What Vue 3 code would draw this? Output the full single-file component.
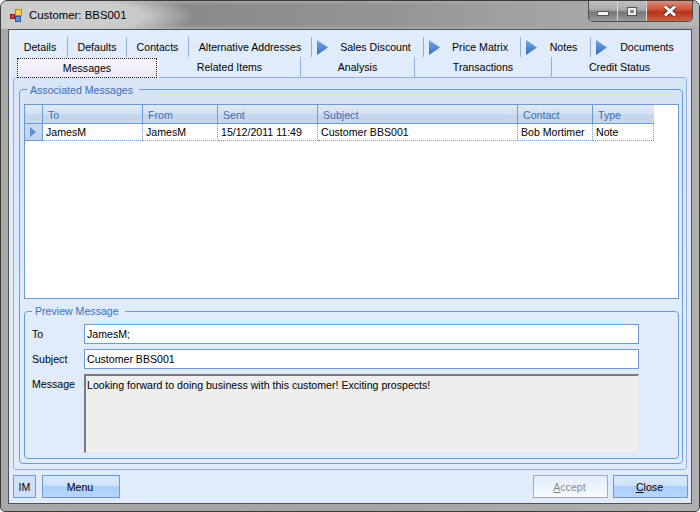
<script setup>
const topTabs = [
  { label: 'Details' }, { label: 'Defaults' }, { label: 'Contacts' },
  { label: 'Alternative Addresses' }, { label: 'Sales Discount', arrow: true },
  { label: 'Price Matrix', arrow: true }, { label: 'Notes', arrow: true }, { label: 'Documents', arrow: true }
]
const lowerTabs = ['Messages', 'Related Items', 'Analysis', 'Transactions', 'Credit Status']
const columns = ['To', 'From', 'Sent', 'Subject', 'Contact', 'Type']
const row = ['JamesM', 'JamesM', '15/12/2011 11:49', 'Customer BBS001', 'Bob Mortimer', 'Note']
</script>

<template>
  <div class="window">
    <header class="titlebar">
      <svg class="app-icon" width="14" height="14" viewBox="0 0 14 14">
        <rect x="0.5" y="5.5" width="4" height="4" fill="#e04030" stroke="#8a2018" />
        <rect x="5.5" y="0.5" width="6" height="6" fill="#f8cc50" stroke="#b08a20" />
        <rect x="5.5" y="7.5" width="5" height="5" fill="#5c90e0" stroke="#2c5aa0" />
      </svg>
      <span class="title-text">Customer: BBS001</span>
      <div class="controls">
        <div class="ctl ctl-min"><span class="glyph-min"></span></div>
        <div class="ctl ctl-max"><span class="glyph-max"></span></div>
        <div class="ctl ctl-close">
          <svg width="16" height="12" viewBox="0 0 16 12">
            <path d="M3 1.5 L13 10.5 M13 1.5 L3 10.5" stroke="#6a3028" stroke-width="5" fill="none" />
            <path d="M3 1.5 L13 10.5 M13 1.5 L3 10.5" stroke="#fff" stroke-width="3" fill="none" />
          </svg>
        </div>
      </div>
    </header>

    <main class="client">
      <nav class="tabs tabs-top">
        <div v-for="tab in topTabs" :key="tab.label" class="tab" :class="{ 'has-arrow': tab.arrow }">
          <svg v-if="tab.arrow" class="tab-arrow" width="11" height="15" viewBox="0 0 11 15">
            <defs>
              <linearGradient id="tabArrow" x1="0" y1="0" x2="0" y2="1">
                <stop offset="0" stop-color="#7aa6de" />
                <stop offset="1" stop-color="#2f6cc4" />
              </linearGradient>
            </defs>
            <path d="M0 0 L11 7.5 L0 15 Z" fill="url(#tabArrow)" />
          </svg>
          <span class="tab-label">{{ tab.label }}</span>
        </div>
      </nav>
      <nav class="tabs tabs-lower">
        <div v-for="(tab, i) in lowerTabs" :key="tab" class="tab" :class="{ selected: i === 0 }">
          <span class="tab-focus">{{ tab }}</span>
        </div>
      </nav>

      <section class="panel">
        <fieldset class="group group-assoc">
          <legend>Associated Messages</legend>
          <div class="grid">
            <div class="head corner"></div>
            <div v-for="c in columns" :key="c" class="head">{{ c }}</div>
            <div class="row-head"><span class="row-mark"></span></div>
            <div v-for="(v, i) in row" :key="i" class="cell">{{ v }}</div>
          </div>
          <fieldset class="group group-preview">
            <legend>Preview Message</legend>
            <div class="form">
              <label>To</label>
              <div class="field">JamesM;</div>
              <label>Subject</label>
              <div class="field">Customer BBS001</div>
              <label class="label-message">Message</label>
              <div class="message">Looking forward to doing business with this customer! Exciting prospects!</div>
            </div>
          </fieldset>
        </fieldset>
      </section>

      <footer class="footer">
        <button class="btn btn-im">IM</button>
        <button class="btn btn-menu">Menu</button>
        <span class="spacer"></span>
        <button class="btn btn-accept" disabled><u>A</u>ccept</button>
        <button class="btn btn-close"><u>C</u>lose</button>
      </footer>
    </main>
  </div>
</template>

<style>
html, body { margin: 0; background: #fff; }
</style>

<style scoped>
.window {
  width: 700px;
  height: 512px;
  box-sizing: border-box;
  padding: 0 7px 7px;
  display: flex;
  flex-direction: column;
  background: linear-gradient(90deg, #a8a8a8, #a4a4a4 50%, #b0b0b0);
  border: 1px solid #3c3c3c;
  border-radius: 7px 7px 5px 5px;
  font: 10.6px "Liberation Sans", Arial, sans-serif;
  color: #000;
  overflow: hidden;
}
.titlebar {
  height: 28px;
  flex: none;
  display: flex;
  align-items: flex-start;
  margin: 0 -7px;
  padding-left: 9px;
  background:
    radial-gradient(ellipse 135px 26px at 58px 15px, #d0d0d0 0%, #cacaca 62%, rgba(170,170,170,0) 100%),
    linear-gradient(#a6a6a6, rgba(140,140,140,0) 4px, rgba(140,140,140,0) 24px, #a8a8a8),
    linear-gradient(90deg, #a0a0a0, #8a8a8a 28%, #949494 55%, #a8a8a8 85%, #b8b8b8);
}
.app-icon { margin-top: 8px; flex: none; }
.title-text { margin: 7px 0 0 5px; line-height: 15px; font-size: 11.4px; }
.controls {
  margin-left: auto;
  margin-right: 6px;
  display: flex;
  height: 20px;
  border: 1px solid #4c4c4c;
  border-top: 0;
  border-radius: 0 0 5px 5px;
  overflow: hidden;
}
.ctl {
  display: flex;
  align-items: center;
  justify-content: center;
  height: 100%;
}
.ctl-min, .ctl-max {
  width: 28px;
  background: linear-gradient(#c0c0c0, #a8a8a8 45%, #757575 55%, #9a9a9a);
  border-right: 1px solid #d8d8d8;
}
.ctl-close {
  width: 45px;
  background: linear-gradient(#d89080, #c85038 45%, #b83018 55%, #d06040);
}
.glyph-min {
  width: 10px;
  height: 3px;
  margin-top: 5px;
  background: #f4f4f4;
  border: 1px solid #555;
}
.glyph-max {
  width: 4px;
  height: 3px;
  background: #888;
  border: 2px solid #eee;
  outline: 1px solid #555;
}
.client {
  flex: 1;
  min-height: 0;
  display: flex;
  flex-direction: column;
  box-sizing: border-box;
  padding: 7px 4px 0;
  background: #e0ecfc;
  border: 1px solid #505058;
}
.tabs {
  display: grid;
  height: 20px;
  flex: none;
}
.tabs-top { grid-template-columns: 55px 59px 62px 123px 112px 97px 70px 96px; }
.tabs-lower { grid-template-columns: 146px 142px 114px 137px 135px; }
.tab {
  display: flex;
  align-items: center;
  justify-content: center;
  border-right: 1px solid #8fb0da;
  white-space: nowrap;
  min-width: 0;
}
.tab:last-child { border-right: 0; }
.tabs-lower .tab:not(.selected) { padding-bottom: 1px; box-sizing: border-box; }
.has-arrow {
  justify-content: flex-start;
  padding-left: 5px;
}
.tab-arrow { flex: none; }
.has-arrow .tab-label { flex: 1; text-align: center; }
.selected {
  margin-left: 4px;
  margin-top: 1px;
  margin-bottom: -1px;
  position: relative;
  z-index: 1;
  background: linear-gradient(#f8f6fc, #ece8f6);
  border-right: 2px solid #f4f8ff;
}
.tab-focus { display: block; text-align: center; }
.selected .tab-focus {
  flex: 1;
  align-self: stretch;
  line-height: 18px;
  border: 1px dotted #222;
}
.panel {
  height: 393px;
  flex: none;
  box-sizing: border-box;
  padding: 3px 3px 5px 5px;
  border: 1px solid #8fb2dc;
  border-radius: 3px;
  background: linear-gradient(#d8e5f6, #e0ecfc 60%);
}
.group {
  margin: 0;
  padding: 0;
  min-width: 0;
  min-inline-size: 0;
  border: 1px solid #6b9ad8;
  border-radius: 4px;
}
.group > legend {
  padding: 0 6px 0 3px;
  line-height: 14px;
  color: #3c6eb8;
}
.group-assoc > legend { margin-left: 3px; padding-top: 2px; }
.group-assoc {
  padding: 7px 4px 4px;
  height: 383px;
  box-sizing: border-box;
  background: linear-gradient(#d6e4f5, #e0ecfc 60%);
}
.grid {
  height: 195px;
  box-sizing: border-box;
  display: grid;
  grid-template-columns: 18px 100px 75px 100px 200px 75px 61px;
  grid-auto-rows: min-content;
  background: #fff;
  border: 1px solid #6b9ad8;
  width: 655px;
}
.head {
  height: 19px;
  line-height: 20px;
  padding-left: 5px;
  box-sizing: border-box;
  color: #3c6eb8;
  background: linear-gradient(#dfe9f6, #d4e1f2 50%, #c2d4ec 55%, #c8d9ef);
  border-right: 1px solid #6b9ad8;
  border-bottom: 1px solid #6b9ad8;
  overflow: hidden;
}
.head:nth-child(7) { border-right: 0; }
.corner { padding: 0; }
.row-head {
  height: 17px;
  display: flex;
  align-items: center;
  padding-left: 5px;
  box-sizing: border-box;
  background: linear-gradient(#c8d9ef, #c2d4ec);
  border-right: 1px solid #6b9ad8;
  border-bottom: 1px solid #6b9ad8;
}
.row-mark {
  width: 0;
  height: 0;
  border-left: 6px solid #5f8fd0;
  border-top: 5px solid transparent;
  border-bottom: 5px solid transparent;
}
.cell {
  height: 17px;
  line-height: 16px;
  padding-left: 3px;
  box-sizing: border-box;
  white-space: nowrap;
  border-right: 1px dotted #6b9ad8;
  border-bottom: 1px dotted #6b9ad8;
  overflow: hidden;
}
.group-preview {
  margin-top: 5px;
  padding: 6px 5px 5px 7px;
  height: 155px;
  box-sizing: border-box;
  width: 655px;
  background: transparent;
}
.form {
  display: grid;
  grid-template-columns: 52px 555px;
  grid-template-rows: 20px 20px 79px;
  row-gap: 5px;
}
.form label { line-height: 20px; }
.form .label-message { line-height: 21px; }
.field {
  box-sizing: border-box;
  height: 20px;
  line-height: 18px;
  padding-left: 2px;
  background: #fff;
  border: 1px solid #6b9ad8;
}
.message {
  box-sizing: border-box;
  padding: 2px 0 0 1px;
  line-height: 15px;
  background: #eeeeee;
  border: 1px solid;
  border-color: #7a7a7a #e6e6e6 #e6e6e6 #7a7a7a;
  border-top-width: 2px;
  border-left-width: 2px;
}
.footer {
  margin-top: 5px;
  margin-right: -1px;
  display: flex;
  gap: 6px;
}
.spacer { flex: 1; }
.btn {
  height: 23px;
  margin: 0;
  padding: 0 2px 0 0;
  font: inherit;
  color: #000;
  box-sizing: border-box;
  border: 1px solid #6b9ad8;
  background: linear-gradient(#d8e8fc, #cfe2fb 45%, #aed0fb 50%, #b4d4fc);
}
.btn-im { width: 23px; background: #cfe1f8; padding: 0; }
.btn-menu { width: 78px; }
.btn-accept {
  width: 75px;
  color: #8a8a8a;
  border-color: #a8a8a8;
  background: linear-gradient(#e0ecfc, #f8fbff);
}
.btn-close { width: 75px; margin-left: -1px; }
</style>
